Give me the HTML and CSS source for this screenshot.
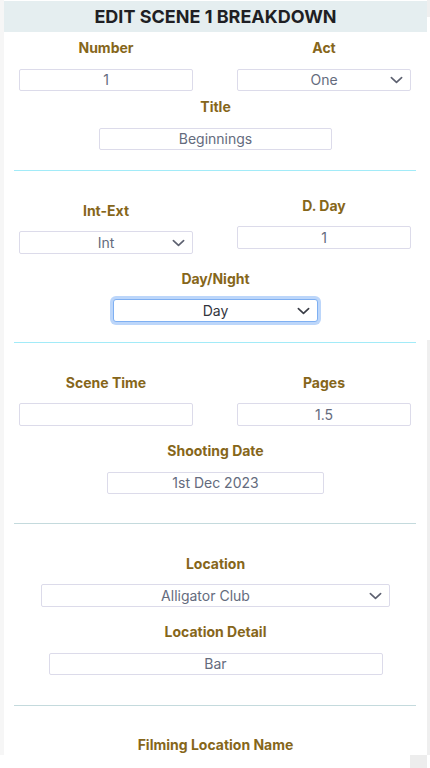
FILE: index.html
```html
<!DOCTYPE html>
<html>
<head>
<meta charset="utf-8">
<link rel="stylesheet" href="styles.css">
</head>
<body>
<div class="frame">
  <div class="modal">
    <div class="header"><h1>EDIT SCENE 1 BREAKDOWN</h1></div>

    <section class="sec sec1">
      <div class="row">
        <div class="field">
          <div class="label mb11">Number</div>
          <div class="input">1</div>
        </div>
        <div class="field">
          <div class="label mb11">Act</div>
          <div class="input select"><span>One</span><svg class="chev" viewBox="0 0 14 8"><path d="M1.5 1.5 L7 6.5 L12.5 1.5"/></svg></div>
        </div>
      </div>
      <div class="field single gap6">
        <div class="label mb11">Title</div>
        <div class="input w233">Beginnings</div>
      </div>
    </section>
    <hr class="line cyan">

    <section class="sec sec2">
      <div class="row">
        <div class="field shift5">
          <div class="label">Int-Ext</div>
          <div class="input select h23"><span>Int</span><svg class="chev" viewBox="0 0 14 8"><path d="M1.5 1.5 L7 6.5 L12.5 1.5"/></svg></div>
        </div>
        <div class="field">
          <div class="label">D. Day</div>
          <div class="input h23">1</div>
        </div>
      </div>
      <div class="field single gap15">
        <div class="label">Day/Night</div>
        <div class="input select focus w205 h23"><span>Day</span><svg class="chev dark" viewBox="0 0 14 8"><path d="M1.5 1.5 L7 6.5 L12.5 1.5"/></svg></div>
      </div>
    </section>
    <hr class="line cyan">

    <section class="sec sec3">
      <div class="row">
        <div class="field">
          <div class="label">Scene Time</div>
          <div class="input h23"></div>
        </div>
        <div class="field">
          <div class="label">Pages</div>
          <div class="input h23">1.5</div>
        </div>
      </div>
      <div class="field single gap15">
        <div class="label mb11">Shooting Date</div>
        <div class="input w217">1st Dec 2023</div>
      </div>
    </section>
    <hr class="line pale">

    <section class="sec sec4">
      <div class="field single">
        <div class="label">Location</div>
        <div class="input select w349 h23 offset"><span>Alligator Club</span><svg class="chev" viewBox="0 0 14 8"><path d="M1.5 1.5 L7 6.5 L12.5 1.5"/></svg></div>
      </div>
      <div class="field single gap15">
        <div class="label mb11">Location Detail</div>
        <div class="input w334">Bar</div>
      </div>
    </section>
    <hr class="line pale">

    <section class="sec sec5">
      <div class="field single">
        <div class="label">Filming Location Name</div>
      </div>
    </section>
  </div>
  <div class="sb sb-top"></div>
  <div class="sb sb-right"></div>
</div>
<div class="corner"></div>
</body>
</html>
```

FILE: styles.css
```css
* { box-sizing: border-box; }
html, body { margin: 0; padding: 0; background: #fff; }
body {
  font-family: Inter, "Noto Sans", sans-serif;
  width: 430px;
  height: 768px;
  overflow: hidden;
  position: relative;
}
.frame {
  position: relative;
  width: 430px;
  height: 755px;
  background: #fff;
  overflow: hidden;
}
.modal {
  width: 427px;
  height: 755px;
  border-left: 4px solid #f6f6f6;
  background: #fff;
  padding-top: 1px;
  overflow: hidden;
}
.header {
  background: #e5eef0;
  height: 31px;
  display: flex;
  align-items: center;
  justify-content: center;
}
.header h1 {
  margin: 0;
  font-size: 18px;
  font-weight: 700;
  color: #1f1f24;
  letter-spacing: 0;
}
.sec {
  margin: 0 10px;
  padding: 0 5px;
}
.sec1 { padding-top: 6px; padding-bottom: 20px; }
.sec2 { padding-top: 25px; padding-bottom: 20px; }
.sec3 { padding-top: 30px; padding-bottom: 29px; }
.sec4 { padding-top: 30px; padding-bottom: 30px; }
.sec5 { padding-top: 29px; }
.row {
  display: grid;
  grid-template-columns: 174px 174px;
  column-gap: 44px;
  align-items: start;
}
.field {
  display: flex;
  flex-direction: column;
  align-items: center;
}
.shift5 { margin-top: 5px; }
.gap6 { margin-top: 6px; }
.gap15 { margin-top: 15px; }
.label {
  font-size: 14px;
  line-height: 20px;
  font-weight: 700;
  color: #86661a;
  margin-bottom: 10px;
  letter-spacing: 0;
}
.mb11 { margin-bottom: 11px; }
.input {
  width: 100%;
  height: 22px;
  border: 1px solid #dcdbea;
  border-radius: 2px;
  background: #fff;
  font-size: 14px;
  line-height: 20px;
  color: #646b7d;
  text-align: center;
  position: relative;
}
.h23 { height: 23px; line-height: 21px; }
.w233 { width: 233px; }
.w217 { width: 217px; }
.w205 { width: 205px; }
.w349 { width: 349px; }
.w334 { width: 334px; }
.select { display: flex; align-items: center; justify-content: center; }
.select span { display: block; }
.offset { padding-right: 20px; }
.chev {
  position: absolute;
  right: 7px;
  top: 50%;
  width: 13px;
  height: 8px;
  margin-top: -4px;
  fill: none;
  stroke: #5d6170;
  stroke-width: 1.8;
  stroke-linecap: round;
  stroke-linejoin: round;
}
.chev.dark { stroke: #3a3d46; }
.focus {
  border-color: #7fb0f2;
  box-shadow: 0 0 0 3px #bcd6fa;
  border-radius: 3px;
  color: #33353d;
}
.line {
  margin: 0 11px 0 10px;
  border: 0;
  height: 1px;
}
.line.cyan { background: #a2ebf8; }
.line.pale { background: #c4dadd; }
.sb { position: absolute; background: #efefef; }
.sb-top { right: 0; top: 0; width: 3px; height: 17px; }
.sb-right { right: 0; top: 340px; width: 3px; height: 415px; }
.corner {
  position: absolute;
  left: 410px;
  top: 755px;
  width: 17px;
  height: 13px;
  background: #ededed;
}
```
